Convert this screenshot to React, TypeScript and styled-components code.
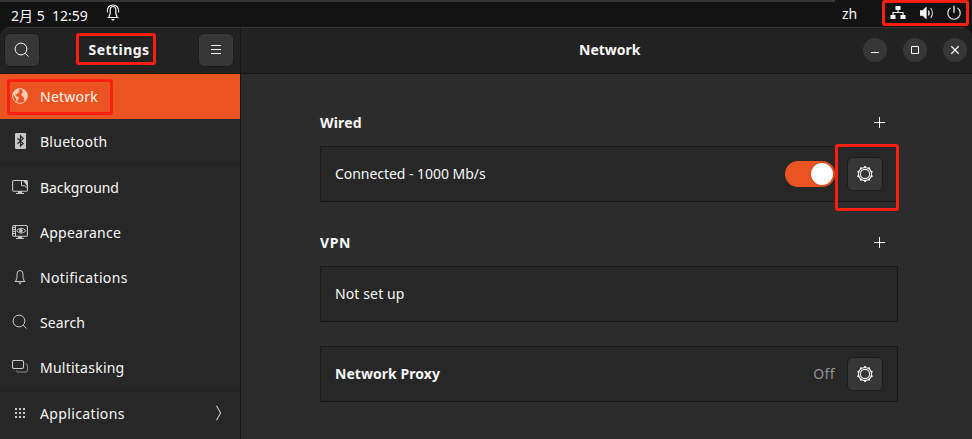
import React from 'react';
import styled, { createGlobalStyle, css } from 'styled-components';

const GlobalStyle = createGlobalStyle`
  * { box-sizing: border-box; }
  html, body { margin: 0; background: #131313; overflow: hidden; }
  button { font: inherit; color: inherit; padding: 0; }
`;

const Desktop = styled.div`
  position: relative;
  width: 972px;
  height: 439px;
  overflow: hidden;
  background: #131313;
  color: #f7f7f7;
  font: 14px/20px 'Noto Sans', 'Noto Sans CJK SC', sans-serif;
  display: flex;
  flex-direction: column;
`;

const Strip = styled.div`
  width: 835px;
  height: 2px;
  flex: none;
  background: #353535;
`;

const TopBar = styled.header`
  height: 25px;
  flex: none;
  display: flex;
  align-items: center;
  padding: 0 10px 3px 11px;
`;

const Label = styled.span<{ $track?: number; $bold?: boolean; $muted?: boolean }>`
  white-space: pre;
  letter-spacing: ${(p) => p.$track ?? 0}px;
  font-weight: ${(p) => (p.$bold ? 700 : 400)};
  color: ${(p) => (p.$muted ? '#929292' : 'inherit')};
`;

const Clock = styled(Label)`
  width: 94px;
  padding-top: 5px;
`;

const Tray = styled.div`
  margin-left: auto;
  display: flex;
  align-items: center;
  gap: 12px;
`;

const Language = styled(Label)`
  width: 36px;
  padding-top: 2px;
`;

const Window = styled.main`
  flex: 1;
  display: grid;
  grid-template: 47px 1fr / 241px 1fr;
  border-radius: 11px 11px 0 0;
  overflow: hidden;
  background: #2c2c2c;
`;

const headerBase = css`
  background: #222;
  border-top: 1px solid #353535;
  border-bottom: 1px solid #181818;
  display: flex;
  align-items: center;
  justify-content: space-between;
`;

const SideHeader = styled.div`
  ${headerBase}
  padding: 0 6px 1px 4px;
  border-right: 1px solid #181818;
`;

const MainHeader = styled.div`
  ${headerBase}
  padding: 0 5px 1px 338px;
`;

const SquareButton = styled.button`
  width: 36px;
  height: 34px;
  flex: none;
  border: 1px solid #1b1b1b;
  border-radius: 6px;
  background: #373737;
  display: grid;
  place-items: center;
`;

const WindowControls = styled.div`
  display: flex;
  gap: 16px;
`;

const RoundButton = styled.button`
  width: 24px;
  height: 24px;
  border: 0;
  border-radius: 50%;
  background: #373737;
  display: grid;
  place-items: center;
`;

const Sidebar = styled.nav`
  background: #272727;
  border-right: 1px solid #181818;
`;

const NavItem = styled.a<{ $active?: boolean; $divided?: boolean }>`
  height: ${(p) => (p.$divided ? 46 : 45)}px;
  display: flex;
  align-items: center;
  gap: 12px;
  padding: 0 13px 0 12px;
  background: ${(p) => (p.$active ? '#e95420' : 'transparent')};
  color: ${(p) => (p.$active ? '#fff5f1' : '#f7f7f7')};
  border-bottom: ${(p) => (p.$divided ? '1px solid #222' : '0')};
  > svg { color: ${(p) => (p.$active ? '#f9cbb9' : '#c8c8c8')}; flex: none; margin-bottom: 1px; }
  > svg:last-child { margin-left: auto; }
`;

const Content = styled.section`
  padding: 36px 74px 0 79px;
`;

const SectionTitle = styled.div`
  height: 24px;
  display: flex;
  align-items: center;
  justify-content: space-between;
  padding-right: 11px;
  margin-bottom: 12px;
  > span { padding-top: 2px; }
`;

const Card = styled.div`
  height: 56px;
  margin-bottom: 28px;
  border: 1px solid #191919;
  background: #272727;
  display: flex;
  align-items: center;
  padding: 0 14px;
`;

const ProxyCard = styled(Card)`
  margin-top: -4px;
`;

const CardActions = styled.div`
  margin-left: auto;
  display: flex;
  align-items: center;
  gap: 12px;
`;

const Switch = styled.span`
  width: 50px;
  height: 26px;
  border-radius: 13px;
  padding: 2px;
  background: #e95420;
  display: flex;
  justify-content: flex-end;
  &::after {
    content: '';
    width: 22px;
    height: 22px;
    border-radius: 50%;
    background: #fff;
    box-shadow: 0 0 2px #a23812;
  }
`;

const Highlight = styled.div<{ $x: number; $y: number; $w: number; $h: number }>`
  position: absolute;
  left: ${(p) => p.$x}px;
  top: ${(p) => p.$y}px;
  width: ${(p) => p.$w}px;
  height: ${(p) => p.$h}px;
  border: 3px solid #ff1e12;
  border-radius: 3px;
  pointer-events: none;
`;

const Icon = ({ children, w = 16, h = 16 }: { children: React.ReactNode; w?: number; h?: number }) => (
  <svg width={w} height={h} viewBox={`0 0 ${w} ${h}`} fill="none" stroke="currentColor">
    {children}
  </svg>
);

const SearchIcon = () => (
  <Icon>
    <circle cx="7" cy="7" r="5.9" />
    <path d="M11.2 11.2 14.5 14.5" />
  </Icon>
);

const GlobeIcon = () => (
  <Icon>
    <circle cx="8" cy="8" r="7.4" />
    <path
      fill="currentColor"
      stroke="none"
      d="M.8 5.8 3 2.2 6 .8 7.8 2 6.6 3 7.4 4.2 5.4 5.2 4.6 6.8 3.2 6.6 4 8.2 6.2 8.8 7 10.3 5.8 11.8 5.4 14.2 4.5 13.3 4.1 10.7 2.4 8.4ZM10.2 1.2 13 2.6 15 5.2 15.3 8.6 14 11.4 12.6 13 11.7 11.2 11.8 9 9.8 8.2 9.1 6.4 10.1 4.8 11.4 4.2 10.2 3.1Z"
    />
  </Icon>
);

const BluetoothIcon = () => (
  <Icon>
    <rect x="3" y="0" width="11" height="16" rx="1.2" fill="currentColor" stroke="none" />
    <path stroke="#272727" strokeWidth="1.2" d="M5.4 5.2 11.2 10.4 8.5 13V3L11.2 5.6 5.4 10.8" />
  </Icon>
);

const MonitorIcon = ({ eye }: { eye?: boolean }) => (
  <Icon>
    <rect x=".6" y="1.5" width="14.8" height="10.8" rx="1.4" strokeWidth="1.1" />
    <path fill="currentColor" stroke="none" d="M6 12h4v2h2v1H4v-1h2z" />
    {eye ? (
      <>
        <path d="M3.5 2v10M1 3.5h2M1 5.5h2M1 7.5h2M1 9.5h2" />
        <path d="M4.6 6.7Q9 1.7 14 6.7 9 11.7 4.6 6.7Z" />
        <circle cx="8.8" cy="6.7" r="1.5" fill="currentColor" />
      </>
    ) : (
      <>
        <path fill="currentColor" stroke="none" d="M10.5 1H14q1.9 0 1.9 2v5z" />
        <path d="M9.5 1.5v5.2l3.2.1 2.8 2" />
      </>
    )}
  </Icon>
);

const BellIcon = () => (
  <Icon>
    <path d="M2.7 12.5h10.6M3.8 12 5 8.5V5Q5 1.5 8 1.5T11 5V8.5L12.2 12" />
    <path fill="currentColor" stroke="none" d="M6.2 13.6h3.6L8 15.5z" />
  </Icon>
);

const RingingBellIcon = () => (
  <Icon w={16} h={18}>
    <path d="M2.5 13.5h11M4 13 5.2 9.2V6Q5.2 2.5 8 2.5T10.8 6V9.2L12 13" strokeWidth="1.2" />
    <path d="M2.4 8.5C1.7 4.2 4 1 8 1s6.3 3.2 5.6 7.5" strokeWidth="1.1" />
    <path fill="currentColor" stroke="none" d="M6 15h4l-2 2z" />
  </Icon>
);

const WindowsIcon = () => (
  <Icon>
    <rect x=".5" y="1.5" width="11" height="8" rx="1.4" strokeWidth="1.1" />
    <path opacity=".6" d="M4.5 11.5q0 1.5 1.5 1.5h8q1.5 0 1.5-1.5v-5q0-1.5-1.5-1.5h-.5" />
  </Icon>
);

const GridIcon = () => (
  <Icon>
    <path strokeWidth="2" strokeDasharray="2 2" d="M3 4h10M3 8h10M3 12h10" />
  </Icon>
);

const ChevronIcon = () => (
  <Icon>
    <path strokeWidth="1.1" d="M5.5 .7 9.6 8 5.5 15.3" />
  </Icon>
);

// Rounded tooth tips are spread evenly around the outer ring.
const GearIcon = () => {
  const teeth = Array.from({ length: 10 }, (_, i) => {
    const a = (i * Math.PI) / 5 - Math.PI / 2;
    return <circle key={i} cx={8 + 7 * Math.cos(a)} cy={8 + 7 * Math.sin(a)} r="1.05" fill="currentColor" stroke="none" />;
  });
  return (
    <Icon>
      <circle cx="8" cy="8" r="6.6" strokeWidth="1.05" />
      <circle cx="8" cy="8" r="4.6" strokeWidth="1.1" />
      {teeth}
    </Icon>
  );
};

const MenuIcon = () => (
  <Icon>
    <path d="M3 3.5h10M3 7.5h10M3 11.5h10" />
  </Icon>
);

const PlusIcon = () => (
  <Icon w={15} h={15}>
    <path d="M2 7.5h11M7.5 2v11" />
  </Icon>
);

const WiredIcon = () => (
  <Icon>
    <path fill="currentColor" stroke="none" d="M5.5 1h5v4h-5zM.5 10h5v4h-5zM10.5 10h5v4h-5z" />
    <path d="M8 5v2.5M3 10V7.5h10V10" strokeWidth="1.1" />
  </Icon>
);

const VolumeIcon = () => (
  <Icon>
    <path fill="currentColor" stroke="none" d="M2 5.3h2.6L8.6 1.5v13l-4-3.8H2z" />
    <path d="M10.4 5.6q1.5 2.4 0 4.8" strokeWidth="1.4" />
    <path d="M12.7 3q3.4 5 0 10" strokeWidth="1.1" opacity=".85" />
  </Icon>
);

const PowerIcon = () => (
  <Icon>
    <path d="M4.6 2.9a6.2 6.2 0 1 0 6.8 0" strokeWidth="1.1" />
    <path d="M8 .8v7" strokeWidth="1.3" />
  </Icon>
);

const navItems = [
  { name: 'Network', icon: <GlobeIcon />, track: 0.25, active: true },
  { name: 'Bluetooth', icon: <BluetoothIcon />, track: 0.27, divided: true },
  { name: 'Background', icon: <MonitorIcon />, track: -0.08 },
  { name: 'Appearance', icon: <MonitorIcon eye />, track: 0.26 },
  { name: 'Notifications', icon: <BellIcon />, track: 0.34 },
  { name: 'Search', icon: <SearchIcon />, track: 0.14 },
  { name: 'Multitasking', icon: <WindowsIcon />, track: 0.24, divided: true },
  { name: 'Applications', icon: <GridIcon />, track: 0.36, submenu: true },
];

export default function App() {
  return (
    <>
      <GlobalStyle />
      <Desktop>
        <Strip />
        <TopBar>
          <Clock>2月 5  12:59</Clock>
          <RingingBellIcon />
          <Tray>
            <Language>zh</Language>
            <WiredIcon />
            <VolumeIcon />
            <PowerIcon />
          </Tray>
        </TopBar>
        <Window>
          <SideHeader>
            <SquareButton aria-label="Search"><SearchIcon /></SquareButton>
            <Label $bold $track={0.45}>Settings</Label>
            <SquareButton aria-label="Menu"><MenuIcon /></SquareButton>
          </SideHeader>
          <MainHeader>
            <Label $bold>Network</Label>
            <WindowControls>
              <RoundButton aria-label="Minimize"><Icon><path d="M4 10.5h8" /></Icon></RoundButton>
              <RoundButton aria-label="Maximize"><Icon><path d="M4.5 4.5h7v7h-7z" /></Icon></RoundButton>
              <RoundButton aria-label="Close"><Icon><path strokeWidth="1.3" d="m4.3 4.3 7.4 7.4m0-7.4-7.4 7.4" /></Icon></RoundButton>
            </WindowControls>
          </MainHeader>
          <Sidebar>
            {navItems.map((item) => (
              <NavItem key={item.name} $active={item.active} $divided={item.divided}>
                {item.icon}
                <Label $track={item.track}>{item.name}</Label>
                {item.submenu && <ChevronIcon />}
              </NavItem>
            ))}
          </Sidebar>
          <Content>
            <SectionTitle><Label $bold $track={0.2}>Wired</Label><PlusIcon /></SectionTitle>
            <Card>
              <Label $track={-0.04}>Connected - 1000 Mb/s</Label>
              <CardActions>
                <Switch role="switch" aria-checked="true" />
                <SquareButton aria-label="Wired options"><GearIcon /></SquareButton>
              </CardActions>
            </Card>
            <SectionTitle><Label $bold $track={0.6}>VPN</Label><PlusIcon /></SectionTitle>
            <Card><Label $track={0.12}>Not set up</Label></Card>
            <ProxyCard>
              <Label $bold $track={0.05}>Network Proxy</Label>
              <CardActions>
                <Label $muted $track={0.4}>Off</Label>
                <SquareButton aria-label="Proxy options"><GearIcon /></SquareButton>
              </CardActions>
            </ProxyCard>
          </Content>
        </Window>
        <Highlight $x={76} $y={33} $w={80} $h={32} />
        <Highlight $x={7} $y={79} $w={106} $h={36} />
        <Highlight $x={882} $y={0} $w={87} $h={26} />
        <Highlight $x={835} $y={144} $w={64} $h={67} />
      </Desktop>
    </>
  );
}
